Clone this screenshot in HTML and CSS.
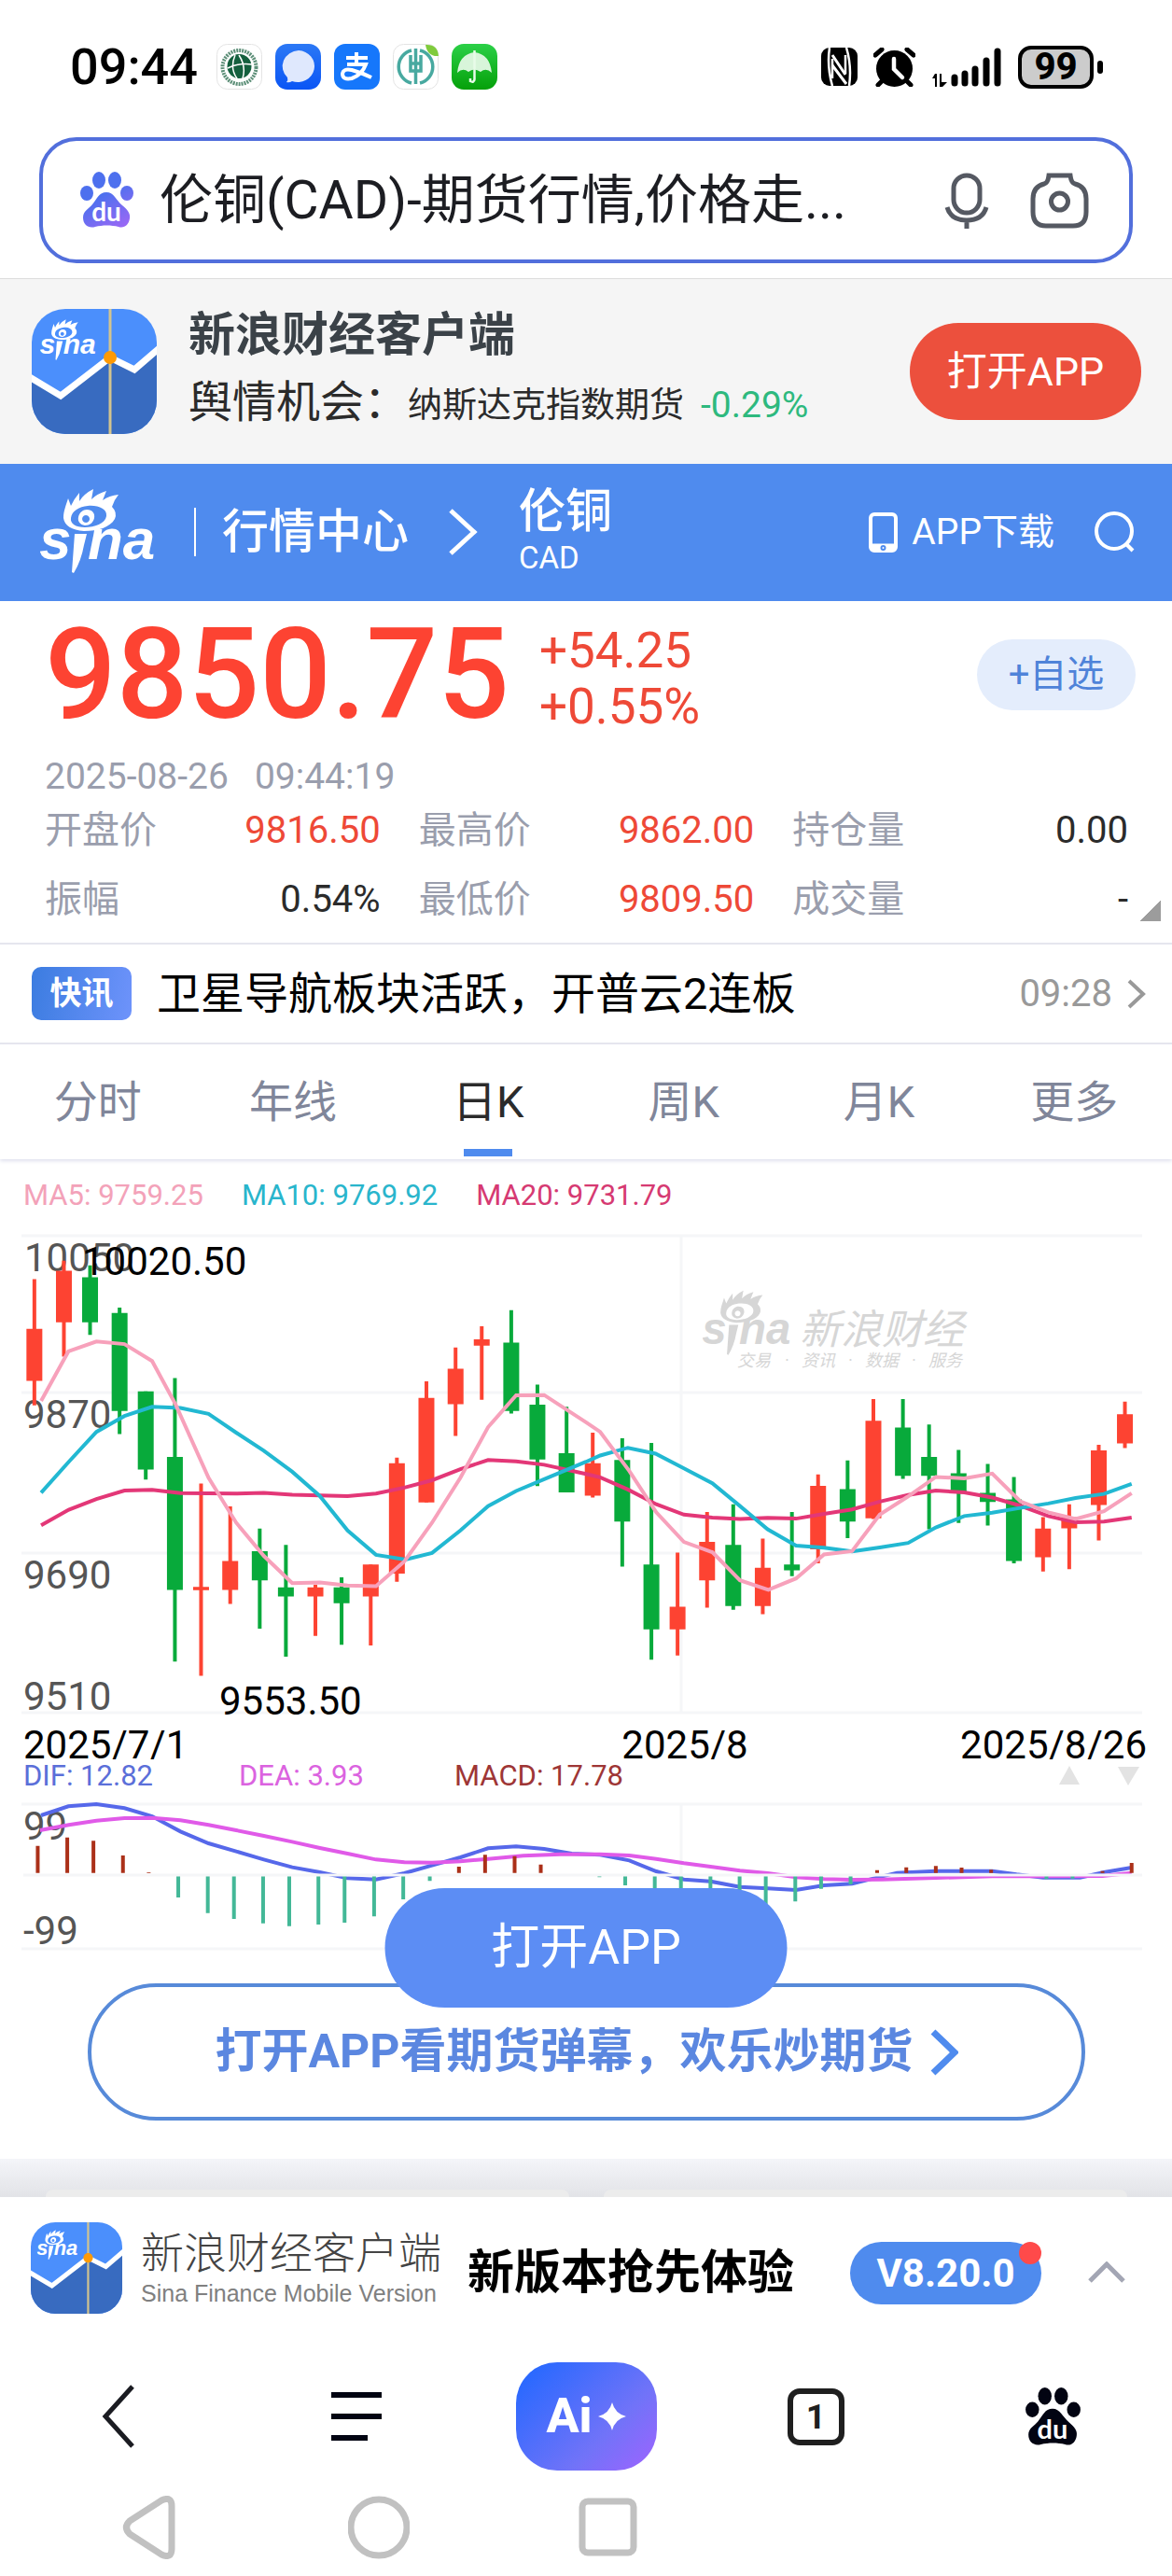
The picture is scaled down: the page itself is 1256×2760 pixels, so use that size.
FILE: index.html
```html
<!DOCTYPE html>
<html lang="zh-CN">
<head>
<meta charset="utf-8">
<meta name="viewport" content="width=device-width, initial-scale=1">
<title>伦铜(CAD)-期货行情</title>
<link rel="stylesheet" href="styles.css">
</head>
<body>
<svg class="defs" aria-hidden="true">
  <symbol id="sina" viewBox="0 0 128 92">
    <path fill="currentColor" fill-rule="evenodd" d="M25 31C25 23 28 17 30 10L33 18Q36 11 42 4L42 13Q47 5 57 0L55 11Q61 5 71 2L67 12Q74 7 84 6Q79 12 77 19Q83 25 80 32C75 41 62 45 47 45C34 44 26 39 25 31ZM51 18C62 17 72 21 71 29C70 37 58 41 48 41C38 41 32 37 33 31C34 23 42 19 51 18ZM50 22C56 22 59 26 58 31C57 36 53 39 48 39C43 38 40 35 41 30C42 25 46 22 50 22ZM49 28a4 4 0 1 0 .1 0Z"/>
    <text class="sina-letters" x="-1" y="75">s</text>
    <text class="sina-letters" x="51" y="75">na</text>
    <path fill="currentColor" d="M37 48H50L47 60Q44 77 36 90L34 89Z"/>
  </symbol>
  <symbol id="app-icon" viewBox="0 0 134 134">
    <clipPath id="app-clip"><rect width="134" height="134" rx="36"/></clipPath>
    <g clip-path="url(#app-clip)">
      <path fill="#4b8ffc" d="M0 0H134V134H0Z"/>
      <path fill="#386bc0" d="M0 75L31 94L84 52L110 66L134 44V134H0Z"/>
      <path fill="none" stroke="#fff" stroke-width="7" d="M-4 72L31 93L84 52L110 65L138 41"/>
      <path stroke="#d2c48f" stroke-width="3" d="M84 0V134"/>
      <circle cx="84" cy="52" r="7" fill="#ff9a05"/>
      <use href="#sina" x="9" y="11" width="62" height="45"/>
    </g>
  </symbol>
  <symbol id="paw" viewBox="0 0 57 61">
    <ellipse cx="20" cy="9" rx="7" ry="9"/><ellipse cx="37" cy="9" rx="7" ry="9"/>
    <ellipse cx="7" cy="23" rx="7" ry="8"/><ellipse cx="50" cy="23" rx="7" ry="8"/>
    <path d="M28 22C36 22 38 30 45 36C51 41 54 45 53 50C52 57 47 61 41 59C33 57 24 57 16 59C9 61 3 57 3 49C3 42 9 40 13 35C18 29 20 22 28 22Z"/>
    <text class="paw-letters" x="28" y="53">du</text>
  </symbol>
</svg>

<header class="status">
  <div class="status-left">
    <span class="clock">09:44</span>
    <svg width="49" height="49" viewBox="0 0 49 49"><rect x=".5" y=".5" width="48" height="48" rx="11" fill="#fff" stroke="#e4e4e4"/><circle cx="24.500" cy="25" r="18" fill="none" stroke="#5d8f78" stroke-width="4" stroke-dasharray="2 1"/><circle cx="24.500" cy="24" r="13" fill="#14603e"/><path d="M20 12Q14 26 22 37M12 26Q24 20 38 22M24 12Q32 24 28 37" fill="none" stroke="#fff" stroke-width="1.500"/></svg>
    <svg width="49" height="49" viewBox="0 0 49 49"><linearGradient id="g1" x2="0" y2="1"><stop stop-color="#2b78f5"/><stop offset="1" stop-color="#0a55f5"/></linearGradient><rect width="49" height="49" rx="13" fill="url(#g1)"/><path d="M25 7a18 17 0 1 1-7 33q-3 2-6 1q2-2 1-5A18 17 0 0 1 25 7Z" fill="#dfe8fd"/></svg>
    <svg width="49" height="49" viewBox="0 0 49 49"><rect width="49" height="49" rx="12" fill="#1677fb"/><path d="M13 15H36M24 9V22M14 22H34Q30 33 19 37Q9 39 9 32Q10 26 19 28Q30 31 40 36" fill="none" stroke="#fff" stroke-width="4"/></svg>
    <svg width="49" height="49" viewBox="0 0 49 49"><rect x=".5" y=".5" width="48" height="48" rx="11" fill="#fff" stroke="#e4e4e4"/><path d="M20 7A18 18 0 0 0 20 42M29 7A18 18 0 0 1 29 42" fill="none" stroke="#48a9a0" stroke-width="3.500"/><path d="M24.500 5V43M19 12V29H30V12M19 21H30" fill="none" stroke="#48a9a0" stroke-width="3.500"/><path d="M35 1Q48 0 49 13Q37 14 35 1Z" fill="#7fcb3c"/></svg>
    <svg width="49" height="49" viewBox="0 0 49 49"><linearGradient id="g2" x2="0" y2="1"><stop stop-color="#2bd047"/><stop offset="1" stop-color="#05a00a"/></linearGradient><rect width="49" height="49" rx="13" fill="url(#g2)"/><path d="M6 31Q8 11 24.500 9Q41 11 43 31Q37 25 31 30Q24 25 18 30Q12 25 6 31Z" fill="#d8f5da"/><path d="M24.500 7V38Q24 42 20 40V37" fill="none" stroke="#e8fbe9" stroke-width="2.500"/></svg>
  </div>
  <div class="status-right">
    <svg width="39" height="41" viewBox="0 0 39 41"><rect width="39" height="41" rx="9"/><path d="M9 0Q6 20 12 41M30 41Q33 20 27 0M12 12V33M26 8V28" fill="none" stroke="#fff" stroke-width="2.500"/><path d="M12 8L26 29M12 19L27 39" stroke="#fff" stroke-width="3"/></svg>
    <svg width="45" height="42" viewBox="0 0 45 42"><circle cx="22.500" cy="22.500" r="19.500"/><path d="M2 8L9 2M43 8L36 2M9 36L5 40M36 36L40 40" stroke="#000" stroke-width="5" stroke-linecap="round"/><path d="M22 12V23L31 32" fill="none" stroke="#fff" stroke-width="4.500" stroke-linecap="round"/></svg>
    <svg width="76" height="42" viewBox="0 0 76 42"><path d="M1 33L4 28H6V42H4V33ZM9 28H11V37H17L12 42H9Z"/><path d="M25 32V38M36 28V38M47 23V38M59 14V38M71 4V38" stroke="#000" stroke-width="7" stroke-linecap="round"/></svg>
    <span class="battery">99</span>
  </div>
</header>

<div class="search-wrap">
  <form class="search">
    <svg class="paw" width="57" height="61"><linearGradient id="pg" gradientUnits="userSpaceOnUse" x1="10" y1="0" x2="45" y2="60"><stop offset=".4" stop-color="#4d70ee"/><stop offset="1" stop-color="#9a68f5"/></linearGradient><use href="#paw" fill="url(#pg)"/></svg>
    <input class="search-input" aria-label="搜索" value="伦铜(CAD)-期货行情,价格走...">
    <button type="button" class="icon-btn" aria-label="语音"><svg width="48" height="60" viewBox="0 0 48 60"><rect x="10" y="3" width="28" height="40" rx="14"/><path d="M3 37Q7 51 24 51Q41 51 45 37M24 51V60"/></svg></button>
    <button type="button" class="icon-btn" aria-label="拍照"><svg width="63" height="60" viewBox="0 0 63 60"><path d="M20 3H43Q44 11 48 12Q60 15 60 28V42Q60 57 46 57H17Q3 57 3 42V28Q3 15 15 12Q19 11 20 3Z"/><circle cx="31.500" cy="31" r="9"/></svg></button>
  </form>
</div>

<section class="promo">
  <svg class="on-blue" width="134" height="134"><use href="#app-icon"/></svg>
  <div class="promo-text">
    <h2>新浪财经客户端</h2>
    <p><span class="lead">舆情机会：</span><span class="name">纳斯达克指数期货</span><span class="down">-0.29%</span></p>
  </div>
  <button type="button" class="open-red">打开APP</button>
</section>

<nav class="topbar">
  <a href="#" class="on-blue" aria-label="sina"><svg width="128" height="92"><use href="#sina"/></svg></a>
  <span class="bar-line"></span>
  <a href="#" class="center-link">行情中心</a>
  <svg class="crumb" width="32" height="52" viewBox="0 0 32 52"><path d="M3 3L28 26L3 49"/></svg>
  <div class="symbol"><strong>伦铜</strong><span>CAD</span></div>
  <a href="#" class="download"><svg width="31" height="43" viewBox="0 0 31 43"><rect x="2" y="2" width="27" height="39" rx="4"/><path d="M2 37H29" stroke-width="7"/><circle cx="15.500" cy="38" r="1" stroke="#4f8bee"/></svg>APP下载</a>
  <button type="button" class="icon-btn find" aria-label="查找"><svg width="44" height="44" viewBox="0 0 44 44"><circle cx="22" cy="21" r="19"/><path d="M35 35L42 42"/></svg></button>
</nav>

<main>
  <section class="quote">
    <div class="price-row">
      <span class="price">9850.75</span>
      <div class="change"><span>+54.25</span><span>+0.55%</span></div>
      <button type="button" class="add">+自选</button>
    </div>
    <p class="time"><span>2025-08-26</span><span>09:44:19</span></p>
    <dl class="stats">
      <div><dt>开盘价</dt><dd class="up">9816.50</dd></div>
      <div><dt>最高价</dt><dd class="up">9862.00</dd></div>
      <div><dt>持仓量</dt><dd>0.00</dd></div>
      <div><dt>振幅</dt><dd>0.54%</dd></div>
      <div><dt>最低价</dt><dd class="up">9809.50</dd></div>
      <div><dt>成交量</dt><dd>-</dd></div>
    </dl>
  </section>

  <a href="#" class="news">
    <span class="tag">快讯</span>
    <span class="headline">卫星导航板块活跃，开普云2连板</span>
    <time>09:28</time>
    <svg width="22" height="34" viewBox="0 0 22 34"><path d="M3 3L18 17L3 31"/></svg>
  </a>

  <nav class="tabs">
    <a href="#">分时</a><a href="#">年线</a><a href="#" class="active">日K</a><a href="#">周K</a><a href="#">月K</a><a href="#">更多</a>
  </nav>

  <section class="kline">
    <p class="legend"><span class="ma5">MA5: 9759.25</span><span class="ma10">MA10: 9769.92</span><span class="ma20">MA20: 9731.79</span></p>
    <svg class="chart" viewBox="0 70 1256 575">
      <path class="grid" d="M23 84H1224M23 252H1224M23 424H1224M23 595H1224M730 84V595"/>
      <g class="watermark">
        <use href="#sina" x="753" y="142" width="98" height="72"/>
        <text class="wm-name" x="857" y="200">新浪财经</text>
        <text class="wm-sub" x="790" y="224">交易</text><text class="wm-sub" x="841" y="224">·</text>
        <text class="wm-sub" x="859" y="224">资讯</text><text class="wm-sub" x="909" y="224">·</text>
        <text class="wm-sub" x="927" y="224">数据</text><text class="wm-sub" x="977" y="224">·</text>
        <text class="wm-sub" x="995" y="224">服务</text>
      </g>
      <g class="axis"><text x="26" y="122">10050</text><text x="25" y="290">9870</text><text x="25" y="462">9690</text><text x="25" y="592">9510</text></g>
      <svg width="1256" height="620" viewBox="0 0 3136 1568" preserveAspectRatio="none">
        <path class="wick red" d="M92 330V672M171 280V540M538 884V1405M616 946V1210M844 1158V1297M992 1103V1323M1062 814V1150M1141 607V935M1219 515V755M1289 458V657M1586 746V922M1813 1071V1350M1892 961V1220M2041 1033V1238M2189 859V1100M2337 655V980M2791 975V1122M2861 940V1116M2940 779V1038M3010 662V788"/>
        <path class="body red" d="M92 465V606M171 307V447M538 1164V1173M616 1094V1172M844 1165V1190M992 1103V1190M1062 829V1128M1141 652V935M1219 573V669M1289 493V510M1586 829V917M1813 1218V1279M1892 1042V1146M2041 1112V1216M2189 890V1062M2337 714V978M2791 1006V1084M2861 975V1005M2940 794V942M3010 696V775"/>
        <path class="wick green" d="M241 293V481M320 407V750M390 634V873M468 598V1366M695 1006V1277M765 1050V1353M914 1138V1321M1368 414V694M1438 616V891M1516 676V908M1665 761V1109M1743 774V1361M1962 940V1226M2119 961V1135M2268 821V1032M2416 655V871M2486 724V1008M2565 793V991M2643 831V998M2713 866V1100"/>
        <path class="body green" d="M241 325V447M320 422V687M390 634V846M468 812V1172M695 1067V1146M765 1165V1190M914 1165V1208M1368 502V687M1438 670V819M1516 802V908M1665 820V987M1743 1103V1279M1962 1050V1216M2119 1103V1119M2268 899V987M2416 732V863M2486 812V863M2565 856V908M2643 909V934M2713 927V1094"/>
        <polyline class="line ma20" points="110,997 184,955 258,926 333,903 407,901 483,910 632,911 706,909 782,914 930,918 1006,911 1082,895 1156,875 1232,845 1306,820 1381,824 1456,833 1568,858 1606,867 1680,900 1756,940 1830,968 1906,976 1980,980 2054,977 2130,979 2205,966 2280,954 2354,933 2430,915 2504,903 2580,908 2655,922 2730,944 2805,972 2878,989 2954,987 3028,976"/>
        <polyline class="line ma10" points="110,909 184,825 258,744 333,701 407,676 483,679 558,695 632,746 706,795 782,852 856,918 930,1011 1006,1077 1085,1090 1156,1072 1232,1011 1306,945 1381,904 1456,872 1568,825 1606,808 1680,787 1754,803 1830,843 1906,883 1980,945 2054,1008 2130,1052 2205,1058 2280,1068 2354,1057 2430,1045 2504,1003 2580,972 2655,963 2730,950 2805,938 2878,923 2954,912 3028,885"/>
        <polyline class="line ma5" points="110,660 183,526 258,499 333,506 407,552 470,670 558,868 632,990 706,1080 782,1154 856,1152 930,1160 1006,1162 1082,1095 1156,990 1232,868 1306,731 1381,645 1456,644 1568,718 1606,744 1684,850 1756,962 1830,1042 1906,1070 1980,1146 2056,1172 2130,1141 2205,1076 2280,1067 2354,968 2428,920 2504,866 2580,870 2655,857 2730,932 2805,962 2878,980 2954,959 3028,910"/>
      </svg>
      <g class="mark"><text x="88" y="126">10020.50</text><text x="235" y="597">9553.50</text><text x="25" y="644">2025/7/1</text><text x="734" y="644" text-anchor="middle">2025/8</text><text x="1229" y="644" text-anchor="end">2025/8/26</text></g>
    </svg>
    <div class="legend macd-legend"><span class="dif">DIF: 12.82</span><span class="dea">DEA: 3.93</span><span class="macd">MACD: 17.78</span>
      <svg width="86" height="22" viewBox="0 0 86 22"><path fill="#e3e3e3" d="M0 20L11 0L22 20ZM63 1H86L74 21Z"/></svg>
    </div>
    <svg class="chart" viewBox="0 75 1256 170">
      <path class="grid" d="M23 83H1224M23 238H1224M730 83V158"/>
      <g class="axis"><text x="25" y="121">99</text><text x="25" y="233">-99</text></g>
      <svg width="1256" height="440" viewBox="0 0 3136 1320" preserveAspectRatio="none">
        <polyline class="line dif" points="110,285 183,256 258,249 333,262 407,288 483,337 558,375 632,401 706,427 782,452 856,468 930,487 1006,491 1082,471 1156,446 1232,420 1306,391 1381,385 1456,393 1530,408 1606,412 1684,430 1756,465 1830,491 1900,497 1980,515 2054,520 2130,525 2205,510 2280,505 2340,487 2400,470 2504,464 2655,464 2720,475 2791,485 2890,485 2954,468 3028,453"/>
        <polyline class="line dea" points="107,333 184,316 258,302 333,294 407,293 483,301 558,316 632,333 706,351 782,370 856,390 930,408 1006,427 1082,436 1156,437 1232,433 1306,425 1400,415 1500,410 1606,410 1684,414 1756,425 1830,439 1906,451 1980,463 2054,471 2130,484 2205,490 2280,492 2360,491 2504,486 2655,481 2800,481 2950,480 3028,470"/>
        <path class="wick brown" d="M101 383V470M180 356V470M250 367V470M329 414V470M398 468V470M1228 450V470M1298 412V470M1377 416V470M1447 443V470M2347 461V470M2425 452V470M2504 448V470M2573 453V470M2652 460V470M2950 464V470M3028 438V470"/>
        <path class="wick teal" d="M477 480V549M556 480V599M626 480V618M704 480V632M774 480V641M852 480V636M922 480V630M1001 480V610M1079 480V555M1150 480V496M1604 480V484M1673 480V510M1752 480V540M1822 480V560M1901 480V560M1979 480V570M2049 480V575M2128 480V562M2197 480V521M2276 480V507M2800 480V490M2870 480V488"/>
      </svg>
      <path class="grid" d="M25 159H1224"/>
    </svg>
  </section>

  <div class="cta-wrap">
    <button type="button" class="cta">打开APP看期货弹幕，欢乐炒期货<svg width="30" height="50" viewBox="0 0 30 50"><path d="M3 3L26 25L3 47"/></svg></button>
    <button type="button" class="float-open">打开APP</button>
  </div>
  <div class="peek"><span></span><span></span></div>
</main>

<footer>
  <div class="appbar">
    <svg class="on-blue" width="98" height="98"><use href="#app-icon"/></svg>
    <div class="brand"><span class="cn">新浪财经客户端</span><span class="en">Sina Finance Mobile Version</span></div>
    <strong>新版本抢先体验</strong>
    <button type="button" class="version">V8.20.0<i></i></button>
    <button type="button" class="icon-btn caret" aria-label="收起"><svg width="40" height="24" viewBox="0 0 40 24"><path d="M2 21L20 3L38 21"/></svg></button>
  </div>
  <nav class="toolbar">
    <button type="button" class="icon-btn" aria-label="返回"><svg width="36" height="68" viewBox="0 0 36 68"><path d="M33 2L4 34L33 66" stroke="#1b1c22" stroke-width="5"/></svg></button>
    <button type="button" class="icon-btn" aria-label="菜单"><svg width="56" height="52" viewBox="0 0 56 52"><path d="M1 3H55M1 26H55M1 49H40" stroke="#020412" stroke-width="6"/></svg></button>
    <button type="button" class="ai">Ai<svg width="30" height="30" viewBox="0 0 30 30"><path fill="#fff" d="M15 0Q18 12 30 15Q18 18 15 30Q12 18 0 15Q12 12 15 0Z"/></svg></button>
    <button type="button" class="pages">1</button>
    <button type="button" class="icon-btn paw" aria-label="首页"><svg width="59" height="63"><use href="#paw" fill="#020412"/></svg></button>
  </nav>
  <nav class="sysnav">
    <button type="button" class="icon-btn" aria-label="系统返回"><svg width="66" height="68" viewBox="0 0 66 68"><path d="M46 5Q57 0 57 11V57Q57 68 46 63L12 41Q5 34 12 27Z"/></svg></button>
    <button type="button" class="icon-btn" aria-label="主屏幕"><svg width="66" height="68" viewBox="0 0 66 68"><circle cx="33" cy="34" r="30"/></svg></button>
    <button type="button" class="icon-btn" aria-label="最近任务"><svg width="66" height="68" viewBox="0 0 66 68"><rect x="5" y="6" width="55" height="55" rx="6"/></svg></button>
  </nav>
</footer>
</body>
</html>
```
FILE: styles.css
```css
* { box-sizing: border-box; }
body, p, h2, dl, dd { margin: 0; }
body { background: #fff; color: #2b2b2b; font-family: Roboto, "Noto Sans CJK SC", sans-serif; }
button { margin: 0; padding: 0; border: 0; background: none; font: inherit; color: inherit; }
a { color: inherit; text-decoration: none; }
svg { display: block; flex: none; }
.defs { position: absolute; width: 0; height: 0; }
.sina-letters { font: italic 700 62px "Liberation Sans", sans-serif; fill: currentColor; }
.paw-letters { font: 700 28px Lato, sans-serif; fill: #fff; text-anchor: middle; }
.on-blue { color: #fff; }
.icon-btn { display: flex; align-items: center; justify-content: center; }
.icon-btn svg { fill: none; }

/* system status bar */
.status { display: flex; justify-content: space-between; align-items: center; padding: 47px 75px 51px; color: #000; }
.status-left, .status-right { display: flex; align-items: center; }
.status-left { gap: 14px; }
.clock { margin-right: 6px; font-size: 54px; font-weight: 500; line-height: 49px; }
.status-right { gap: 17px; }
.battery { position: relative; width: 81px; border: 4px solid #000; border-radius: 14px; background: #ccc; font-size: 40px; font-weight: 800; line-height: 38px; text-align: center; margin-right: 9px; }
.battery::after { content: ""; position: absolute; right: -14px; top: 12px; width: 6px; height: 14px; border-radius: 3px; background: #000; }

/* search */
.search-wrap { padding: 0 42px 16px; border-bottom: 1px solid #ddd; }
.search { display: flex; align-items: center; height: 135px; padding: 0 43px 0 40px; border: 4px solid #526fdc; border-radius: 40px; }
.search-input { flex: 1; min-width: 0; margin: 0 32px 0 28px; padding: 0; border: 0; background: none; color: #1c1d22; font: inherit; font-size: 57px; line-height: 80px; outline: 0; }
.search .icon-btn + .icon-btn { margin-left: 44px; }
.search .icon-btn svg { stroke: #555962; stroke-width: 5; }

/* client promotion */
.promo { display: flex; align-items: center; padding: 32px 33px 32px 34px; background: #f5f5f5; }
.promo-text { flex: 1; margin-left: 34px; }
.promo h2 { color: #3b4248; font-size: 50px; font-weight: 700; line-height: 56px; }
.promo p { display: flex; align-items: baseline; margin-top: 10px; line-height: 68px; white-space: nowrap; }
.lead { font-size: 47px; }
.name { font-size: 37px; line-height: 40px; }
.down { margin-left: 18px; color: #2eb97e; font-size: 39px; line-height: 40px; }
.open-red { width: 248px; border-radius: 52px; background: #ec503d; color: #fff; font-size: 43px; line-height: 104px; }

/* blue bar */
.topbar { display: flex; align-items: center; padding: 23px 40px 24px 43px; background: #4f8bee; color: #fff; }
.bar-line { width: 2px; height: 52px; margin: 0 28px 0 37px; background: #fff; }
.center-link { font-size: 50px; font-weight: 500; line-height: 56px; }
.crumb { margin: 0 44px 0 42px; fill: none; stroke: #fff; stroke-width: 5; }
.symbol { display: flex; flex-direction: column; flex: 1; }
.symbol strong { font-size: 50px; font-weight: 500; line-height: 56px; }
.symbol span { font-size: 33px; line-height: 44px; }
.download { display: flex; align-items: center; gap: 15px; margin-right: 42px; font-size: 39px; line-height: 44px; }
.download svg, .find svg { fill: none; stroke: #fff; stroke-width: 4; }

/* quote */
.quote { position: relative; padding: 15px 47px 9px 48px; }
.quote::after { content: ""; position: absolute; right: 12px; bottom: 23px; width: 23px; height: 22px; background: linear-gradient(135deg, transparent 50%, #9c9c9c 50%); }
.price-row { display: flex; align-items: center; }
.price { color: #fd4332; font-size: 135px; font-weight: 500; line-height: 128px; }
.change { display: flex; flex: 1; flex-direction: column; margin-left: 32px; padding-top: 8px; color: #ee4937; font-size: 53px; line-height: 60px; }
.add { width: 170px; margin-right: -8px; border-radius: 38px; background: #e4edfc; color: #4f83d9; font-size: 40px; line-height: 76px; }
.time { display: flex; gap: 28px; margin-top: 24px; color: #9a9ead; font-size: 39px; line-height: 42px; }
.stats { display: grid; grid-template-columns: repeat(3, 1fr); column-gap: 41px; font-size: 40px; line-height: 74px; }
.stats div { display: flex; justify-content: space-between; }
.stats dt { color: #9a9ead; }
.up { color: #ee4937; }

/* news */
.news { display: flex; align-items: center; padding: 24px 27px 24px 34px; border: solid #e5e6ee; border-width: 2px 0; color: #000; }
.tag { width: 107px; border-radius: 10px; background: linear-gradient(100deg, #3b7ce0, #6e93fb); color: #fff; font-size: 34px; font-weight: 700; line-height: 57px; text-align: center; }
.headline { flex: 1; margin-left: 27px; font-size: 47px; line-height: 57px; }
.news time { margin-right: 15px; color: #999; font-size: 40px; }
.news svg { fill: none; stroke: #999; stroke-width: 4; }

/* period tabs */
.tabs { display: grid; grid-template-columns: repeat(6, 1fr); box-shadow: 0 2px 4px #dfe0ee; color: #80869a; font-size: 47px; line-height: 63px; text-align: center; }
.tabs a { position: relative; padding: 30px 0; }
.tabs .active { color: #2b2b2b; }
.tabs .active::after { content: ""; position: absolute; left: 50%; bottom: 3px; width: 52px; height: 8px; margin-left: -26px; background: #4f8bee; }

/* charts */
.legend { display: flex; gap: 41px; padding: 19px 26px 9px 25px; font-size: 31px; line-height: 40px; white-space: nowrap; }
.macd-legend { display: grid; grid-template-columns: 190px 190px 1fr auto; align-items: center; padding: 0 35px 4px 25px; line-height: 36px; }
.chart { width: 100%; height: auto; }
.chart svg { overflow: visible; }
.grid { fill: none; stroke: #f5f6f8; stroke-width: 3; }
.axis { fill: #555; font-size: 42px; }
.mark { fill: #000; font-size: 42px; }
.watermark { color: #d6d6d6; fill: #d6d6d6; }
.wm-name { font-size: 44px; font-style: italic; }
.wm-sub { font-size: 18px; font-style: italic; }
.wick, .body, .line { fill: none; vector-effect: non-scaling-stroke; }
.wick { stroke-width: 4; }
.body { stroke-width: 17; }
.line { stroke-width: 4; }
.red { stroke: #fd4332; }
.green { stroke: #08aa3b; }
.brown { stroke: #ab3019; }
.teal { stroke: #43b897; }
span.ma5 { color: #f3a2b9; }
span.ma10 { color: #29b5cc; }
span.ma20 { color: #d63a72; }
span.dif { color: #5b6fd9; }
span.dea { color: #db63e0; }
span.macd { color: #9e3636; }
.line.ma5 { stroke: #f7a1bb; }
.line.ma10 { stroke: #22b8d2; }
.line.ma20 { stroke: #e33777; }
.line.dif { stroke: #5668ea; }
.line.dea { stroke: #e05ae8; }

/* call to action */
.cta-wrap { position: relative; padding: 30px 93px 41px 94px; }
.cta { display: flex; align-items: center; justify-content: center; gap: 18px; width: 100%; border: 4px solid #578ad9; border-radius: 74px; background: #fff; color: #5b87e0; font-size: 50px; font-weight: 700; line-height: 139px; }
.cta svg { fill: none; stroke: #4f8bee; stroke-width: 7; }
.float-open { position: absolute; left: 50%; top: -72px; width: 431px; border-radius: 64px; background: #5c8df4; color: #fff; font-size: 52px; line-height: 128px; transform: translateX(-50%); }
.peek { display: grid; grid-template-columns: 1fr 1fr; gap: 37px; padding: 33px 48px 0 49px; background: linear-gradient(#f4f5f9, #e2e3e7); }
.peek span { height: 8px; border-radius: 16px 16px 0 0; background: #ececec; }

/* bottom area */
.appbar { display: flex; align-items: center; padding: 27px 50px 26px 33px; color: #000; white-space: nowrap; }
.brand { display: flex; flex-direction: column; margin: 0 28px 0 20px; }
.cn { color: #444; font-size: 46px; font-weight: 300; line-height: 54px; }
.en { color: #808080; font-family: "Liberation Sans", sans-serif; font-size: 25px; line-height: 32px; }
.appbar strong { flex: 1; font-size: 50px; font-weight: 700; }
.version { position: relative; width: 205px; margin-top: 10px; border-radius: 34px; background: #4f8bee; color: #fff; font-size: 42px; font-weight: 700; line-height: 67px; }
.version i { position: absolute; top: 0; right: 0; width: 24px; height: 24px; border-radius: 50%; background: #ff4a4a; }
.caret { margin: 10px 0 0 50px; }
.caret svg { stroke: #a3a6b4; stroke-width: 5; }
.toolbar { display: grid; grid-template-columns: 1fr 1fr 238px 1fr 1fr; align-items: center; justify-items: center; padding: 26px 0 27px; }
.ai { display: flex; align-items: center; justify-content: center; gap: 6px; width: 151px; border-radius: 44px; background: linear-gradient(135deg, #2468ff 5%, #7173f8 65%, #9f63ff); color: #fff; font-size: 52px; font-weight: 800; line-height: 116px; }
.pages { width: 61px; border: 6px solid #1f1f1f; border-radius: 13px; color: #1f1f1f; font-size: 37px; font-weight: 700; line-height: 49px; }
.sysnav { display: flex; gap: 180px; padding: 0 127px 18px; }
.sysnav svg { stroke: #c1c1c1; stroke-width: 7; }
```
